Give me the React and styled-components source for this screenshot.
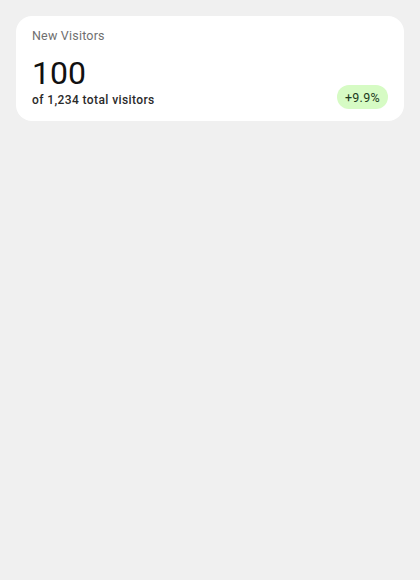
import React from 'react';
import styled, { createGlobalStyle } from 'styled-components';

const GlobalStyle = createGlobalStyle`
  body {
    margin: 0;
    background: #f0f0f0;
    font-family: Roboto, "Noto Sans", sans-serif;
  }
`;

const Page = styled.div`
  padding: 16px;
`;

const Card = styled.div`
  background: #ffffff;
  border-radius: 16px;
  padding: 12px 16px;
  display: flex;
  flex-direction: column;
`;

const Title = styled.div`
  font-size: 12.5px;
  color: #6f6f6f;
  line-height: 16px;
  letter-spacing: 0.2px;
`;

const Footer = styled.div`
  display: flex;
  align-items: flex-end;
  justify-content: space-between;
  margin-top: 11px;
`;

const Value = styled.div`
  font-size: 32px;
  line-height: 36px;
  color: #111;
  font-weight: 400;
`;

const Caption = styled.div`
  font-size: 12px;
  font-weight: 500;
  color: #2a2a2a;
  letter-spacing: 0.4px;
  line-height: 18px;
`;

const Badge = styled.span`
  background: #d6fbc4;
  color: #1c3a1c;
  font-size: 12.5px;
  letter-spacing: 0.3px;
  border-radius: 12px;
  padding: 0 8px;
  height: 24px;
  display: inline-flex;
  align-items: center;
`;

export default function App() {
  return (
    <>
      <GlobalStyle />
      <Page>
        <Card>
          <Title>New Visitors</Title>
          <Footer>
            <div>
              <Value>100</Value>
              <Caption>of 1,234 total visitors</Caption>
            </div>
            <Badge>+9.9%</Badge>
          </Footer>
        </Card>
      </Page>
    </>
  );
}
